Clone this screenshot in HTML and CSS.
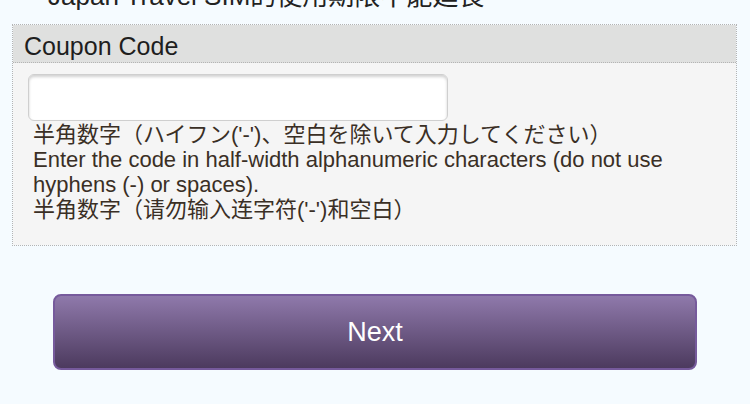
FILE: index.html
```html
<!DOCTYPE html>
<html lang="ja">
<head>
  <meta charset="UTF-8">
  <meta name="viewport" content="width=device-width, initial-scale=1.0">
  <title>Coupon Code</title>
  <link rel="stylesheet" href="styles.css">
</head>
<body>

<p class="notice" lang="zh-TW">Japan Travel SIM的使用期限不能延長。</p>

<div class="field-box">
  <div class="field-head">Coupon Code</div>
  <div class="field-body">
    <input type="text" id="coupon" name="coupon" class="coupon-input">
    <p class="hint">
      <span lang="ja">半角数字（ハイフン('-')、空白を除いて入力してください）</span><br>
      Enter the code in half-width alphanumeric characters (do not use hyphens (-) or spaces).<br>
      <span lang="zh-CN">半角数字（请勿输入连字符('-')和空白）</span>
    </p>
  </div>
</div>

<div class="actions">
  <button class="next-button">Next</button>
</div>

</body>
</html>
```

FILE: styles.css
```css
body {
  margin: 0;
  background-color: #f5fbff;
  color: #222;
  font-family: "Liberation Sans", "Noto Sans CJK JP", sans-serif;
}

.notice {
  margin: -19px 0 0;
  padding-left: 48px;
  height: 43px;
  font-size: 26px;
  line-height: 30px;
  color: #222;
}

.field-box {
  margin: 0 13px 0 12px;
  border: 1px dotted #b4b4b4;
}

.field-head {
  background-color: #dfe0df;
  border-bottom: 1px dotted #b4b4b4;
  height: 37px;
  line-height: 42px;
  padding-left: 11px;
  font-size: 25px;
  color: #1e1e1e;
}

.field-body {
  background-color: #f5f5f5;
  padding: 11px 15px 0;
  height: 171px;
}

.coupon-input {
  display: block;
  width: 420px;
  height: 47px;
  box-sizing: border-box;
  border: 1px solid #cfcfcf;
  border-radius: 6px;
  background-color: #fff;
  box-shadow: inset 0 2px 3px rgba(0, 0, 0, 0.18);
  font-size: 20px;
}

.hint {
  margin: 1px 0 0;
  padding-left: 5px;
  font-size: 22px;
  line-height: 25px;
  color: #3a2f25;
}

.actions {
  padding: 48px 53px 0 53px;
}

.next-button {
  display: block;
  width: 644px;
  height: 76px;
  border: 2px solid #765a9c;
  border-radius: 8px;
  background: linear-gradient(to bottom, #8f79ab, #4c3a5e);
  color: #fff;
  font-family: "Liberation Sans", sans-serif;
  font-size: 27px;
  cursor: pointer;
}
```
